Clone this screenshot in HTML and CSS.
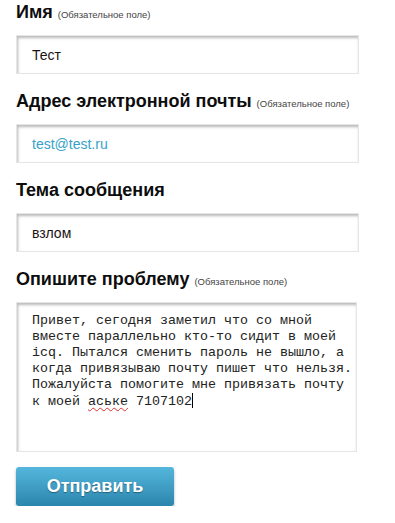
FILE: index.html
```html
<!DOCTYPE html>
<html lang="ru">
<head>
    <meta charset="UTF-8">
    <meta name="viewport" content="width=device-width, initial-scale=1.0">
    <title>Обратная связь</title>
    <link rel="stylesheet" href="styles.css">
</head>
<body>

    <form class="feedback-form">
        <div class="form-row">
            <div class="form-label">Имя <span class="required">(Обязательное поле)</span></div>
            <div class="form-input">Тест</div>
        </div>

        <div class="form-row">
            <div class="form-label">Адрес электронной почты <span class="required">(Обязательное поле)</span></div>
            <div class="form-input email">test@test.ru</div>
        </div>

        <div class="form-row">
            <div class="form-label">Тема сообщения</div>
            <div class="form-input">взлом</div>
        </div>

        <div class="form-row">
            <div class="form-label">Опишите проблему <span class="required">(Обязательное поле)</span></div>
            <div class="form-textarea">
                <div class="line">Привет, сегодня заметил что со мной</div>
                <div class="line">вместе параллельно кто-то сидит в моей</div>
                <div class="line">icq. Пытался сменить пароль не вышло, а</div>
                <div class="line">когда привязываю почту пишет что нельзя.</div>
                <div class="line">Пожалуйста помогите мне привязать почту</div>
                <div class="line"><span>к моей </span><span class="misspelled">аське</span><span> 7107102</span><span class="caret"></span></div>
            </div>
        </div>

        <button type="button" class="submit-btn">Отправить</button>
    </form>

</body>
</html>
```

FILE: styles.css
```css
body {
    margin: 0;
    font-family: "Liberation Sans", Arial, sans-serif;
    background-color: #ffffff;
    color: #111;
}

.feedback-form {
    padding: 1px 0 0 16px;
}

.form-row {
    margin-bottom: 16px;
}

.form-label {
    font-size: 18px;
    font-weight: bold;
    line-height: 22px;
    margin-bottom: 12px;
    color: #0d0d0d;
}

.required {
    font-size: 9.5px;
    font-weight: normal;
    line-height: 1;
    color: #444;
}

.form-input,
.form-textarea {
    box-sizing: border-box;
    background-color: #fff;
    border: 1px solid #e6e6e6;
    box-shadow: inset 1px 2px 3px rgba(0, 0, 0, 0.28);
}

.form-input {
    width: 343px;
    height: 39px;
    padding: 0 15px;
    display: flex;
    align-items: center;
    font-size: 14px;
    color: #1b1214;
}

.form-input.email {
    color: #35a2c9;
}

.form-textarea {
    width: 341px;
    height: 150px;
    padding: 10px 4px 0 15px;
    font-family: "Liberation Mono", "Courier New", monospace;
    font-size: 13.333px;
    line-height: 16px;
    color: #222;
}

.line {
    white-space: pre;
}

.misspelled {
    text-decoration: underline wavy #e03030;
    text-decoration-thickness: 1px;
    text-underline-offset: 2px;
}

.caret {
    display: inline-block;
    width: 1px;
    height: 15px;
    background-color: #000;
    vertical-align: -3px;
}

.submit-btn {
    display: block;
    margin-top: -1px;
    width: 158px;
    height: 39px;
    border: 0;
    border-radius: 3px;
    background: linear-gradient(to bottom, #55b7dd, #2b85ad);
    box-shadow: 0 2px 3px rgba(0, 0, 0, 0.3);
    color: #fff;
    font-family: "Liberation Sans", Arial, sans-serif;
    font-size: 18px;
    font-weight: bold;
    text-shadow: 0 1px 1px rgba(0, 0, 0, 0.35);
    cursor: pointer;
}
```
